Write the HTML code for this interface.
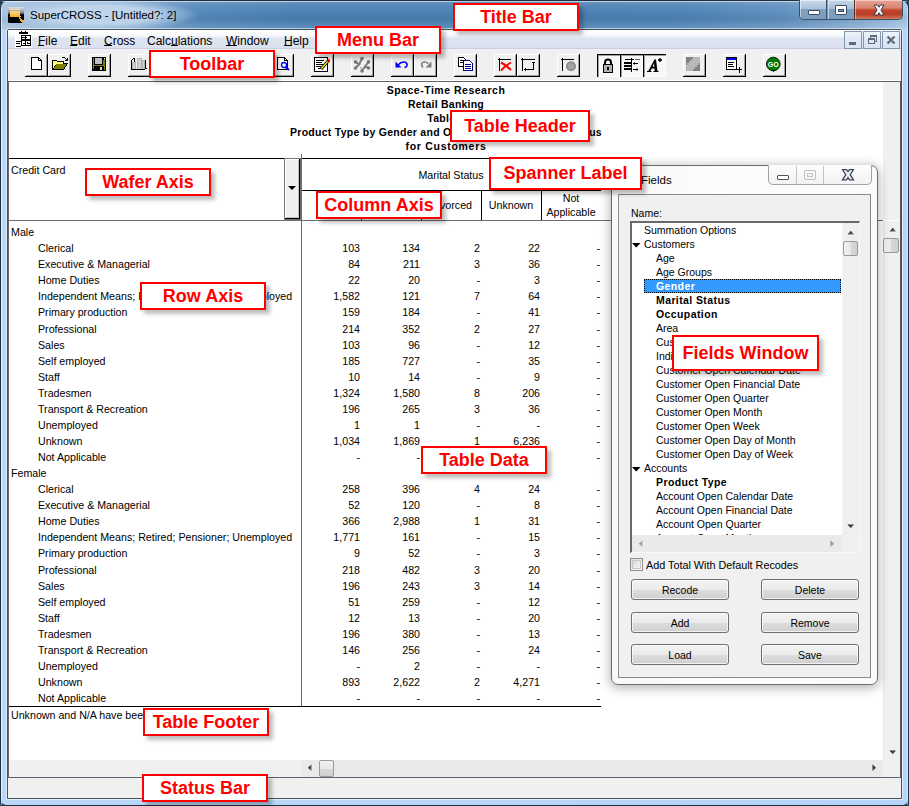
<!DOCTYPE html>
<html><head><meta charset="utf-8"><title>SuperCROSS</title><style>
*{box-sizing:border-box;margin:0;padding:0}
html,body{width:909px;height:806px;overflow:hidden;background:#2a3f58;font-family:"Liberation Sans",sans-serif;position:relative}
.a{position:absolute}
.tt{font-size:11.5px;line-height:12px;color:#000;white-space:nowrap}
.mn{font-size:12px;line-height:12px;color:#000;white-space:nowrap}
.tx{font-size:10.67px;line-height:12px;color:#000;white-space:nowrap}
.hd{font-size:10.5px;line-height:12px;font-weight:bold;letter-spacing:0.27px;color:#000;white-space:nowrap}
.fi{font-size:10.5px;line-height:12px;color:#000;white-space:nowrap}
.fw{font-size:12px;line-height:12px;color:#000;white-space:nowrap}
.fb{font-size:10.5px;line-height:12px;color:#000;white-space:nowrap}
.lbl{position:absolute;border:2px solid #ff0000;background:#fff;color:#ff0000;font-weight:bold;font-size:18px;text-align:center;white-space:nowrap;box-shadow:4px 4px 4px rgba(0,0,0,0.26)}
</style></head><body>
<div class="a" style="left:0;top:0;width:909px;height:806px;background:#1f2f40;border-radius:8px 8px 6px 6px"></div>
<div class="a" style="left:1px;top:1px;width:907px;height:804px;border-radius:7px 7px 5px 5px;background:linear-gradient(90deg,#bad8f8 0,#b9d7f8 8px,#b7d6f8 60%,#b5d5f8 100%)"></div>
<div class="a" style="left:1px;top:1px;width:907px;height:28px;border-radius:7px 7px 0 0;background:linear-gradient(90deg,#a9c4e0 0px,#8fb2d6 60px,#6f9cc8 140px,#5488ba 200px,#4a80b3 300px,#4a80b3 560px,#4e83b5 680px,#5f8fbf 780px,#86acd3 860px,#a8c6e6 907px)"></div>
<div class="a" style="left:1px;top:1px;width:907px;height:28px;border-radius:7px 7px 0 0;background:linear-gradient(180deg,rgba(255,255,255,0.18) 0,rgba(255,255,255,0.08) 4px,rgba(255,255,255,0) 12px,rgba(0,0,0,0.05) 18px,rgba(255,255,255,0.10) 26px)"></div>
<div class="a" style="left:2px;top:1px;width:905px;height:1px;background:rgba(255,255,255,0.55);border-radius:6px 6px 0 0"></div>
<div class="a" style="left:1px;top:8px;width:1px;height:797px;background:rgba(255,255,255,0.6)"></div>
<div class="a" style="left:907px;top:8px;width:1px;height:797px;background:rgba(255,255,255,0.45)"></div>
<div class="a" style="left:0px;top:1px;width:200px;height:28px;background:radial-gradient(ellipse 100px 16px at 100px 14px,rgba(200,220,240,0.85) 55%,rgba(200,220,240,0) 100%)"></div>
<svg class="a" style="left:8px;top:7px" width="16" height="16" viewBox="0 0 16 16" shape-rendering="crispEdges"><defs><linearGradient id="ig" x1="0" y1="0" x2="0" y2="1"><stop offset="0" stop-color="#e4e4e4"/><stop offset="0.35" stop-color="#8a8a8a"/><stop offset="0.5" stop-color="#000"/><stop offset="1" stop-color="#000"/></linearGradient><linearGradient id="og" x1="0" y1="0" x2="0" y2="1"><stop offset="0" stop-color="#ffd48a"/><stop offset="1" stop-color="#fbac2a"/></linearGradient></defs><rect x="0" y="0" width="16" height="16" rx="1.5" fill="url(#ig)" shape-rendering="auto"/><rect x="2" y="2" width="10" height="1" fill="#ffdca8"/><rect x="2" y="4" width="8" height="6" fill="url(#og)"/><rect x="10" y="4" width="2" height="4" fill="#ffc870"/><path d="M10 8 H12 V9 H13 V10 H12 V11 H13 V12 H14 V13 H16 V16 H14 V15 H13 V14 H12 V12 H11 V10 H10 Z" fill="#fbb030"/></svg>
<div class="a tt" style="left:30px;top:9px">SuperCROSS - [Untitled?: 2]</div>
<div class="a" style="left:799px;top:0px;width:104px;height:20px;border:1px solid #3b5266;border-top:none;border-radius:0 0 5px 5px;background:#6f97bd;overflow:hidden"><div class="a" style="left:0;top:0;width:27px;height:19px;background:linear-gradient(#c9dbeb 0,#a9c3dc 45%,#7fa0c0 50%,#7b9dbf 100%);border-right:1px solid #38536b;box-shadow:inset 1px 1px 0 rgba(255,255,255,0.5)"></div><div class="a" style="left:28px;top:0;width:26px;height:19px;background:linear-gradient(#c4d7ea 0,#a6c0da 45%,#7c9ebf 50%,#7a9cbe 100%);box-shadow:inset 1px 1px 0 rgba(255,255,255,0.5)"></div><div class="a" style="left:54px;top:0;width:49px;height:19px;background:linear-gradient(#e8a396 0,#d98472 40%,#c2432a 55%,#b83c26 75%,#d07a5c 100%);border-left:1px solid #5b2a22;box-shadow:inset 1px 1px 0 rgba(255,255,255,0.45)"></div></div>
<div class="a" style="left:808px;top:10px;width:12px;height:5px;background:#fff;border:1px solid #3c4d60;border-radius:1px"></div>
<div class="a" style="left:835px;top:5px;width:12px;height:10px;border:1px solid #3c4d60;border-radius:1px;background:#fff"><div class="a" style="left:2px;top:3px;width:6px;height:3px;background:#7a9cbe;border:1px solid #3c4d60"></div></div>
<svg class="a" style="left:872px;top:4px" width="14" height="12" viewBox="0 0 14 12"><path d="M2 1 L5.5 1 L7 3.2 L8.5 1 L12 1 L9 6 L12 11 L8.5 11 L7 8.8 L5.5 11 L2 11 L5 6 Z" fill="#f4f4f4" stroke="#3b3b4a" stroke-width="1"/></svg>
<div class="a" style="left:6px;top:28px;width:897px;height:772px;border:1px solid rgba(255,255,255,0.55);border-radius:3px 3px 0 0"></div><div class="a" style="left:7px;top:29px;width:895px;height:770px;background:#f0f0f0;border:1px solid #46515c;border-radius:2px 2px 0 0"></div>
<div class="a" style="left:8px;top:30px;width:893px;height:19px;background:linear-gradient(#ffffff 0,#f8f9fc 30%,#eef1f8 36%,#e0e5f2 42%,#dce1ef 90%,#d6dbea 100%)"></div>
<div class="a" style="left:8px;top:48px;width:893px;height:1px;background:#c9d0e0"></div>
<svg class="a" style="left:15px;top:31px" width="17" height="17" viewBox="0 0 17 17" shape-rendering="crispEdges"><rect x="0" y="0" width="17" height="17" fill="#fff"/><rect x="4" y="1" width="9" height="2" fill="#000"/><rect x="6" y="0" width="1" height="1" fill="#000"/><rect x="10" y="0" width="1" height="1" fill="#000"/><rect x="6" y="4" width="10" height="11" fill="#000"/><rect x="7" y="5" width="3" height="1" fill="#fff"/><rect x="7" y="7" width="3" height="1" fill="#fff"/><rect x="11" y="5" width="4" height="1" fill="#fff"/><rect x="11" y="7" width="4" height="1" fill="#fff"/><rect x="12" y="6" width="3" height="1" fill="#fff"/><rect x="7" y="10" width="3" height="4" fill="#fff"/><rect x="11" y="10" width="4" height="4" fill="#fff"/><rect x="8" y="12" width="2" height="1" fill="#000"/><rect x="12" y="12" width="3" height="1" fill="#000"/><rect x="12" y="11" width="1" height="1" fill="#000"/><rect x="1" y="10" width="5" height="1" fill="#000"/><rect x="1" y="12" width="4" height="1" fill="#000"/><rect x="1" y="15" width="5" height="1" fill="#000"/></svg>
<div class="a mn" style="left:38px;top:35px">File</div>
<div class="a mn" style="left:70px;top:35px">Edit</div>
<div class="a mn" style="left:104px;top:35px">Cross</div>
<div class="a mn" style="left:147px;top:35px">Calculations</div>
<div class="a mn" style="left:226px;top:35px">Window</div>
<div class="a mn" style="left:284px;top:35px">Help</div>
<div class="a" style="left:38px;top:45px;width:6px;height:1px;background:#000"></div>
<div class="a" style="left:70px;top:45px;width:7px;height:1px;background:#000"></div>
<div class="a" style="left:104px;top:45px;width:8px;height:1px;background:#000"></div>
<div class="a" style="left:171px;top:45px;width:7px;height:1px;background:#000"></div>
<div class="a" style="left:226px;top:45px;width:11px;height:1px;background:#000"></div>
<div class="a" style="left:284px;top:45px;width:8px;height:1px;background:#000"></div>
<div class="a" style="left:844px;top:31px;width:18px;height:18px;border:1px solid #8696aa;background:linear-gradient(#eef4fb,#dfe9f5 45%,#d8e4f2)"></div>
<div class="a" style="left:863px;top:31px;width:18px;height:18px;border:1px solid #8696aa;background:linear-gradient(#eef4fb,#dfe9f5 45%,#d8e4f2)"></div>
<div class="a" style="left:882px;top:31px;width:18px;height:18px;border:1px solid #8696aa;background:linear-gradient(#eef4fb,#dfe9f5 45%,#d8e4f2)"></div>
<div class="a" style="left:849px;top:42px;width:7px;height:3px;background:#5d6976"></div>
<svg class="a" style="left:866px;top:34px" width="12" height="12" viewBox="0 0 12 12" shape-rendering="crispEdges"><path d="M4.5 4 V1.5 H10.5 V7.5 H8.5" stroke="#5d6976" stroke-width="1.2" fill="none"/><rect x="2.5" y="4.5" width="6" height="5" fill="none" stroke="#5d6976" stroke-width="1.2"/><rect x="2" y="4" width="7" height="2" fill="#5d6976"/><rect x="4" y="1" width="7" height="2" fill="#5d6976"/></svg>
<svg class="a" style="left:886px;top:35px" width="10" height="10" viewBox="0 0 10 10"><path d="M1.5 1.5 L8.5 8.5 M8.5 1.5 L1.5 8.5" stroke="#5d6976" stroke-width="2.2"/></svg>
<div class="a" style="left:8px;top:49px;width:893px;height:31px;background:#f0f0f0"></div>
<div class="a" style="left:8px;top:80px;width:893px;height:1px;background:#fff"></div>
<div class="a" style="left:25px;top:54px;width:23px;height:23px;background:#f0f0f0;border-right:1px solid #000;border-bottom:1px solid #000;box-shadow:inset 1px 1px 0 #fff,inset -1px -1px 0 #a0a0a0"></div><svg class="a" style="left:25px;top:54px" width="23" height="23" viewBox="0 0 23 23"><g shape-rendering="crispEdges"><path d="M6.5 3.5 H13.5 L16.5 6.5 V15.5 H6.5 Z" fill="#fff" stroke="#000"/><path d="M13.5 3.5 V6.5 H16.5" fill="none" stroke="#000"/></g></svg>
<div class="a" style="left:48px;top:54px;width:23px;height:23px;background:#f0f0f0;border-right:1px solid #000;border-bottom:1px solid #000;box-shadow:inset 1px 1px 0 #fff,inset -1px -1px 0 #a0a0a0"></div><svg class="a" style="left:48px;top:54px" width="23" height="23" viewBox="0 0 23 23"><g shape-rendering="crispEdges" transform="translate(0,-1)"><path d="M4.5 7.5 H8.5 L9.5 8.5 H15.5 V10.5 H4.5 Z" fill="#ffff00" stroke="#000"/><path d="M4.5 7.5 V16.5 H15.5 L19.5 10.5 H8.5 L4.5 16.5" fill="#808000" stroke="#000"/><path d="M4.5 8 V16 L8.5 10.5 H15 V9 H9 L8 8 Z" fill="#ffff80"/><path d="M13.5 4.5 H16.5 L18.5 6.5" fill="none" stroke="#000"/><path d="M17 7.5 H20 V5 Z" fill="#000"/></g></svg>
<div class="a" style="left:88px;top:54px;width:23px;height:23px;background:#f0f0f0;border-right:1px solid #000;border-bottom:1px solid #000;box-shadow:inset 1px 1px 0 #fff,inset -1px -1px 0 #a0a0a0"></div><svg class="a" style="left:88px;top:54px" width="23" height="23" viewBox="0 0 23 23"><g shape-rendering="crispEdges"><rect x="4" y="3" width="14" height="14" fill="#000"/><rect x="5" y="4" width="12" height="12" fill="#808000"/><rect x="6" y="4" width="9" height="7" fill="#000"/><rect x="7" y="4" width="7" height="6" fill="#c0c0c0"/><rect x="6" y="12" width="10" height="4" fill="#000"/><rect x="5" y="15" width="1" height="1" fill="#000"/><rect x="12" y="13" width="2" height="3" fill="#d8d8d8"/><rect x="16" y="4" width="1" height="1" fill="#fff"/><rect x="15" y="4" width="1" height="2" fill="#000"/></g></svg>
<div class="a" style="left:128px;top:54px;width:23px;height:23px;background:#f0f0f0;border-right:1px solid #000;border-bottom:1px solid #000;box-shadow:inset 1px 1px 0 #fff,inset -1px -1px 0 #a0a0a0"></div><svg class="a" style="left:128px;top:54px" width="23" height="23" viewBox="0 0 23 23"><g shape-rendering="crispEdges" transform="translate(0,-1.5)"><rect x="4" y="9" width="4" height="7" fill="#b4b4b4"/><rect x="9" y="5" width="5" height="11" fill="#b4b4b4"/><rect x="14" y="7" width="3" height="9" fill="#b4b4b4"/><rect x="5" y="10" width="2" height="6" fill="#d0d0d0"/><rect x="10" y="6" width="3" height="10" fill="#d0d0d0"/><rect x="15" y="8" width="1" height="8" fill="#d0d0d0"/><rect x="3" y="7" width="1" height="10" fill="#000"/><rect x="3" y="16" width="14" height="1" fill="#000"/><rect x="17" y="7" width="1" height="9" fill="#000"/><rect x="18" y="15" width="1" height="1" fill="#000"/><rect x="5" y="5" width="2" height="1" fill="#000"/><rect x="6" y="5" width="1" height="4" fill="#000"/><rect x="4" y="6" width="1" height="1" fill="#000"/></g></svg>
<div class="a" style="left:151px;top:54px;width:23px;height:23px;background:#f0f0f0;border-right:1px solid #000;border-bottom:1px solid #000;box-shadow:inset 1px 1px 0 #fff,inset -1px -1px 0 #a0a0a0"></div><svg class="a" style="left:151px;top:54px" width="23" height="23" viewBox="0 0 23 23"><g shape-rendering="crispEdges" transform="translate(0,-1.5)"><rect x="4" y="9" width="4" height="7" fill="#b4b4b4"/><rect x="9" y="5" width="5" height="11" fill="#b4b4b4"/><rect x="14" y="7" width="3" height="9" fill="#b4b4b4"/><rect x="5" y="10" width="2" height="6" fill="#d0d0d0"/><rect x="10" y="6" width="3" height="10" fill="#d0d0d0"/><rect x="15" y="8" width="1" height="8" fill="#d0d0d0"/><rect x="3" y="7" width="1" height="10" fill="#000"/><rect x="3" y="16" width="14" height="1" fill="#000"/><rect x="17" y="7" width="1" height="9" fill="#000"/><rect x="18" y="15" width="1" height="1" fill="#000"/><rect x="5" y="5" width="2" height="1" fill="#000"/><rect x="6" y="5" width="1" height="4" fill="#000"/><rect x="4" y="6" width="1" height="1" fill="#000"/></g></svg>
<div class="a" style="left:174px;top:54px;width:23px;height:23px;background:#f0f0f0;border-right:1px solid #000;border-bottom:1px solid #000;box-shadow:inset 1px 1px 0 #fff,inset -1px -1px 0 #a0a0a0"></div><svg class="a" style="left:174px;top:54px" width="23" height="23" viewBox="0 0 23 23"></svg>
<div class="a" style="left:197px;top:54px;width:23px;height:23px;background:#f0f0f0;border-right:1px solid #000;border-bottom:1px solid #000;box-shadow:inset 1px 1px 0 #fff,inset -1px -1px 0 #a0a0a0"></div><svg class="a" style="left:197px;top:54px" width="23" height="23" viewBox="0 0 23 23"></svg>
<div class="a" style="left:220px;top:54px;width:23px;height:23px;background:#f0f0f0;border-right:1px solid #000;border-bottom:1px solid #000;box-shadow:inset 1px 1px 0 #fff,inset -1px -1px 0 #a0a0a0"></div><svg class="a" style="left:220px;top:54px" width="23" height="23" viewBox="0 0 23 23"></svg>
<div class="a" style="left:248px;top:54px;width:23px;height:23px;background:#f0f0f0;border-right:1px solid #000;border-bottom:1px solid #000;box-shadow:inset 1px 1px 0 #fff,inset -1px -1px 0 #a0a0a0"></div><svg class="a" style="left:248px;top:54px" width="23" height="23" viewBox="0 0 23 23"></svg>
<div class="a" style="left:271px;top:54px;width:23px;height:23px;background:#f0f0f0;border-right:1px solid #000;border-bottom:1px solid #000;box-shadow:inset 1px 1px 0 #fff,inset -1px -1px 0 #a0a0a0"></div><svg class="a" style="left:271px;top:54px" width="23" height="23" viewBox="0 0 23 23"><g shape-rendering="crispEdges"><path d="M6.5 3.5 H13.5 L16.5 6.5 V15.5 H6.5 Z" fill="#fff" stroke="#000"/><path d="M13.5 3.5 V6.5 H16.5" fill="none" stroke="#000"/></g><circle cx="13" cy="11" r="2.5" fill="#fff" stroke="#0000ff" stroke-width="1.3"/><path d="M14.5 13 L18 16" stroke="#0000ff" stroke-width="2"/></svg>
<div class="a" style="left:311px;top:54px;width:23px;height:23px;background:#f0f0f0;border-right:1px solid #000;border-bottom:1px solid #000;box-shadow:inset 1px 1px 0 #fff,inset -1px -1px 0 #a0a0a0"></div><svg class="a" style="left:311px;top:54px" width="23" height="23" viewBox="0 0 23 23"><g shape-rendering="crispEdges"><rect x="3.5" y="3.5" width="13" height="14" fill="#fff" stroke="#000"/><rect x="5" y="6" width="8" height="1" fill="#000"/><rect x="5" y="8" width="6" height="1" fill="#000"/><rect x="5" y="10" width="8" height="1" fill="#000"/><rect x="5" y="12" width="5" height="1" fill="#000"/><rect x="7" y="14" width="4" height="1" fill="#000"/></g><path d="M10 15 L18 6" stroke="#000" stroke-width="3"/><path d="M10.3 14.6 L17.6 6.4" stroke="#ffff00" stroke-width="1.4"/><path d="M16.5 7.5 L18.5 5.5" stroke="#ff0000" stroke-width="2"/></svg>
<div class="a" style="left:351px;top:54px;width:23px;height:23px;background:#f0f0f0;border-right:1px solid #000;border-bottom:1px solid #000;box-shadow:inset 1px 1px 0 #fff,inset -1px -1px 0 #a0a0a0"></div><svg class="a" style="left:351px;top:54px" width="23" height="23" viewBox="0 0 23 23"><g fill="#7a7a7a"><circle cx="11" cy="4.6" r="1.8"/><circle cx="4.5" cy="7.9" r="1.8"/><circle cx="17.5" cy="7.9" r="1.8"/><circle cx="4.5" cy="14" r="1.8"/><circle cx="17.5" cy="14" r="1.8"/><circle cx="11" cy="17" r="1.8"/></g><path d="M4.5 7.9 L8 10.5 L11 4.6 M8 10.5 L4.5 14 M17.5 7.9 L14 12.5 L17.5 14 M14 12.5 L11 17 M8 10.5 L9.5 9" fill="none" stroke="#7a7a7a" stroke-width="2"/><circle cx="10" cy="14" r="0.8" fill="#6a8ab0"/></svg>
<div class="a" style="left:391px;top:54px;width:23px;height:23px;background:#f0f0f0;border-right:1px solid #000;border-bottom:1px solid #000;box-shadow:inset 1px 1px 0 #fff,inset -1px -1px 0 #a0a0a0"></div><svg class="a" style="left:391px;top:54px" width="23" height="23" viewBox="0 0 23 23"><path d="M7 11 Q10 7.5 13.5 8 Q16.5 8.5 16 11.5 Q15.5 13.2 13.5 13.5" fill="none" stroke="#0000ff" stroke-width="1.6"/><path d="M4.5 7.5 V13.5 H10.5 Z" fill="#0000ff"/></svg>
<div class="a" style="left:414px;top:54px;width:23px;height:23px;background:#f0f0f0;border-right:1px solid #000;border-bottom:1px solid #000;box-shadow:inset 1px 1px 0 #fff,inset -1px -1px 0 #a0a0a0"></div><svg class="a" style="left:414px;top:54px" width="23" height="23" viewBox="0 0 23 23"><path d="M9 13.5 Q6.5 10.5 8.5 8.5 Q11 7 14.5 9.5" fill="none" stroke="#808080" stroke-width="1.6"/><path d="M17.5 7.5 V13.5 H11.5 Z" fill="#808080"/></svg>
<div class="a" style="left:454px;top:54px;width:23px;height:23px;background:#f0f0f0;border-right:1px solid #000;border-bottom:1px solid #000;box-shadow:inset 1px 1px 0 #fff,inset -1px -1px 0 #a0a0a0"></div><svg class="a" style="left:454px;top:54px" width="23" height="23" viewBox="0 0 23 23"><g shape-rendering="crispEdges" transform="translate(1,0)"><path d="M3.5 3.5 H8.5 L10.5 5.5 V12.5 H3.5 Z" fill="#fff" stroke="#000"/><rect x="5" y="6" width="4" height="1" fill="#000"/><rect x="5" y="8" width="4" height="1" fill="#000"/><path d="M8.5 6.5 H14.5 L17.5 9.5 V16.5 H8.5 Z" fill="#fff" stroke="#000080"/><rect x="10" y="10" width="6" height="1" fill="#000080"/><rect x="10" y="12" width="6" height="1" fill="#000080"/><rect x="10" y="14" width="6" height="1" fill="#000080"/></g></svg>
<div class="a" style="left:494px;top:54px;width:23px;height:23px;background:#f0f0f0;border-right:1px solid #000;border-bottom:1px solid #000;box-shadow:inset 1px 1px 0 #fff,inset -1px -1px 0 #a0a0a0"></div><svg class="a" style="left:494px;top:54px" width="23" height="23" viewBox="0 0 23 23"><g shape-rendering="crispEdges"><rect x="5" y="4" width="1" height="13" fill="#000"/><rect x="4" y="5" width="3" height="1" fill="#000"/><rect x="5" y="5" width="12" height="1" fill="#000"/></g><path d="M7 8.5 Q12 11 17 16 M17 8.5 Q11 12 7 16.5" fill="none" stroke="#ff0000" stroke-width="2"/></svg>
<div class="a" style="left:517px;top:54px;width:23px;height:23px;background:#f0f0f0;border-right:1px solid #000;border-bottom:1px solid #000;box-shadow:inset 1px 1px 0 #fff,inset -1px -1px 0 #a0a0a0"></div><svg class="a" style="left:517px;top:54px" width="23" height="23" viewBox="0 0 23 23"><g shape-rendering="crispEdges"><rect x="5" y="4" width="1" height="13" fill="#000"/><rect x="4" y="5" width="3" height="1" fill="#000"/><rect x="5" y="5" width="13" height="1" fill="#000"/><rect x="16" y="8" width="1" height="8" fill="#000"/><rect x="15" y="8" width="3" height="1" fill="#000"/><rect x="7" y="15" width="10" height="1" fill="#000"/><rect x="8" y="14" width="1" height="3" fill="#000"/></g></svg>
<div class="a" style="left:557px;top:54px;width:23px;height:23px;background:#f0f0f0;border-right:1px solid #000;border-bottom:1px solid #000;box-shadow:inset 1px 1px 0 #fff,inset -1px -1px 0 #a0a0a0"></div><svg class="a" style="left:557px;top:54px" width="23" height="23" viewBox="0 0 23 23"><g shape-rendering="crispEdges"><rect x="5" y="4" width="1" height="13" fill="#000"/><rect x="4" y="5" width="3" height="1" fill="#000"/><rect x="5" y="5" width="12" height="1" fill="#000"/></g><circle cx="14" cy="12.3" r="5" fill="#8c8c8c"/><circle cx="14" cy="12.3" r="3" fill="#a4a4a4"/></svg>
<div class="a" style="left:597px;top:54px;width:23px;height:23px;background:#f7f7f7;border-left:1px solid #000;border-top:1px solid #000;box-shadow:inset 1px 1px 0 #a0a0a0,inset -1px -1px 0 #fff"></div><svg class="a" style="left:597px;top:54px" width="23" height="23" viewBox="0 0 23 23"><path d="M8 11 V8.5 Q8 5.5 11 5.5 Q14 5.5 14 8.5 V11" fill="none" stroke="#000" stroke-width="2"/><g shape-rendering="crispEdges"><rect x="6.5" y="10.5" width="9" height="8" fill="#b0b0b0" stroke="#000"/><rect x="10" y="13" width="2" height="3" fill="#000"/></g></svg>
<div class="a" style="left:620px;top:54px;width:23px;height:23px;background:#f7f7f7;border-left:1px solid #000;border-top:1px solid #000;box-shadow:inset 1px 1px 0 #a0a0a0,inset -1px -1px 0 #fff"></div><svg class="a" style="left:620px;top:54px" width="23" height="23" viewBox="0 0 23 23"><g shape-rendering="crispEdges"><rect x="5" y="5" width="9" height="1" fill="#000"/><rect x="15" y="5" width="5" height="1" fill="#000" opacity="0.6"/><rect x="4" y="8" width="7" height="2" fill="#000"/><rect x="4" y="11" width="7" height="2" fill="#000"/><rect x="4" y="14" width="7" height="2" fill="#000"/><rect x="11" y="4" width="1" height="14" fill="#000"/><rect x="13" y="9" width="5" height="1" fill="#000"/><rect x="13" y="15" width="5" height="1" fill="#000"/></g><path d="M13 9.5 L15 8 V11 Z M18.5 15.5 L16.5 14 V17 Z" fill="#000"/></svg>
<div class="a" style="left:643px;top:54px;width:23px;height:23px;background:#f7f7f7;border-left:1px solid #000;border-top:1px solid #000;box-shadow:inset 1px 1px 0 #a0a0a0,inset -1px -1px 0 #fff"></div><svg class="a" style="left:643px;top:54px" width="23" height="23" viewBox="0 0 23 23"><path d="M5 17.5 L11.5 5.5 H13 L14.5 17.5 H11.8 L11.5 14.5 H8.8 L7.2 17.5 Z M9.7 12.8 H11.3 L11 9 Z" fill="#000" fill-rule="evenodd"/><path d="M4 17.5 H8.5 M10.5 17.5 H15.5" stroke="#000" stroke-width="1"/><path d="M17 4 V8 M15 6 H19" stroke="#000" stroke-width="1.4"/></svg>
<div class="a" style="left:683px;top:54px;width:23px;height:23px;background:#f0f0f0;border-right:1px solid #000;border-bottom:1px solid #000;box-shadow:inset 1px 1px 0 #fff,inset -1px -1px 0 #a0a0a0"></div><svg class="a" style="left:683px;top:54px" width="23" height="23" viewBox="0 0 23 23"><g shape-rendering="crispEdges"><rect x="3" y="3" width="14" height="14" fill="#b8b8b8"/><path d="M3 3 H10 V5 H8 V7 H6 V9 H4 V11 H3 Z" fill="#808080"/><path d="M17 17 H10 V15 H12 V13 H14 V11 H16 V9 H17 Z" fill="#808080"/></g></svg>
<div class="a" style="left:723px;top:54px;width:23px;height:23px;background:#f0f0f0;border-right:1px solid #000;border-bottom:1px solid #000;box-shadow:inset 1px 1px 0 #fff,inset -1px -1px 0 #a0a0a0"></div><svg class="a" style="left:723px;top:54px" width="23" height="23" viewBox="0 0 23 23"><g shape-rendering="crispEdges"><rect x="3.5" y="3.5" width="10" height="12" fill="#fff" stroke="#000"/><rect x="4" y="4" width="9" height="2" fill="#0000ff"/><rect x="5" y="8" width="6" height="1" fill="#000"/><rect x="5" y="10" width="5" height="1" fill="#000"/><rect x="5" y="12" width="6" height="1" fill="#000"/><rect x="16" y="13" width="1" height="6" fill="#000"/><rect x="14" y="15" width="5" height="1" fill="#000"/></g></svg>
<div class="a" style="left:763px;top:54px;width:23px;height:23px;background:#f0f0f0;border-right:1px solid #000;border-bottom:1px solid #000;box-shadow:inset 1px 1px 0 #fff,inset -1px -1px 0 #a0a0a0"></div><svg class="a" style="left:763px;top:54px" width="23" height="23" viewBox="0 0 23 23"><circle cx="10.3" cy="10" r="6.8" fill="#007a00" stroke="#002800" stroke-width="1"/><path d="M9 16 L10.5 18 L12 16 Z" fill="#000"/><text x="10.3" y="12.6" text-anchor="middle" font-family="Liberation Sans" font-weight="bold" font-size="7" fill="#fff" style="-webkit-font-smoothing:antialiased">GO</text></svg>
<div class="a" style="left:8px;top:81px;width:893px;height:697px;background:#fff;border-left:1px solid #6a6a6a;border-top:1px solid #646464;border-right:1px solid #585858"></div>
<div class="a hd" style="left:246px;top:84px;width:400px;text-align:center;letter-spacing:0.51px">Space-Time Research</div>
<div class="a hd" style="left:246px;top:98px;width:400px;text-align:center;letter-spacing:0.22px">Retail Banking</div>
<div class="a hd" style="left:246px;top:112px;width:400px;text-align:center;letter-spacing:0.3px">Table 1</div>
<div class="a hd" style="left:246px;top:126px;width:400px;text-align:center;letter-spacing:0.27px">Product Type by Gender and Occupation and Marital Status</div>
<div class="a hd" style="left:246px;top:140px;width:400px;text-align:center;letter-spacing:0.71px">for Customers</div>
<div class="a" style="left:9px;top:158px;width:276px;height:1px;background:#000"></div>
<div class="a tx" style="left:11px;top:164px">Credit Card</div>
<div class="a" style="left:284px;top:158px;width:17px;height:62px;background:#f0f0f0;border:1px solid #7a7a7a;border-right:1px solid #6e6e6e;border-bottom:1px solid #6e6e6e;box-shadow:inset -1px -1px 0 #000,inset 1px 1px 0 #fff,inset -2px -2px 0 #c4c4c4"></div>
<svg class="a" style="left:288px;top:186px" width="9" height="5" viewBox="0 0 9 5"><path d="M0 0 H8 L4 4 Z" fill="#000"/></svg>
<div class="a" style="left:301px;top:154px;width:1px;height:553px;background:#6e6e6e"></div>
<div class="a" style="left:302px;top:158px;width:299px;height:1px;background:#000"></div>
<div class="a" style="left:302px;top:190px;width:299px;height:1px;background:#000"></div>
<div class="a" style="left:361px;top:190px;width:1px;height:30px;background:#000"></div>
<div class="a" style="left:421px;top:190px;width:1px;height:30px;background:#000"></div>
<div class="a" style="left:481px;top:190px;width:1px;height:30px;background:#000"></div>
<div class="a" style="left:541px;top:190px;width:1px;height:30px;background:#000"></div>
<div class="a" style="left:9px;top:220px;width:874px;height:1px;background:#6e6e6e"></div>
<div class="a tx" style="left:391px;top:169px;width:120px;text-align:center">Marital Status</div>
<div class="a tx" style="left:362px;top:199px;width:58px;text-align:center">Separated</div>
<div class="a tx" style="left:422px;top:199px;width:58px;text-align:center">Divorced</div>
<div class="a tx" style="left:482px;top:199px;width:58px;text-align:center">Unknown</div>
<div class="a tx" style="left:542px;top:192px;width:58px;text-align:center">Not</div>
<div class="a tx" style="left:542px;top:206px;width:58px;text-align:center">Applicable</div>
<div class="a tx" style="left:11px;top:226px">Male</div>
<div class="a tx" style="left:38px;top:242px">Clerical</div>
<div class="a tx" style="left:280px;top:242px;width:80px;text-align:right">103</div>
<div class="a tx" style="left:340px;top:242px;width:80px;text-align:right">134</div>
<div class="a tx" style="left:400px;top:242px;width:80px;text-align:right">2</div>
<div class="a tx" style="left:460px;top:242px;width:80px;text-align:right">22</div>
<div class="a tx" style="left:520px;top:242px;width:80px;text-align:right">-</div>
<div class="a tx" style="left:38px;top:258px">Executive &amp; Managerial</div>
<div class="a tx" style="left:280px;top:258px;width:80px;text-align:right">84</div>
<div class="a tx" style="left:340px;top:258px;width:80px;text-align:right">211</div>
<div class="a tx" style="left:400px;top:258px;width:80px;text-align:right">3</div>
<div class="a tx" style="left:460px;top:258px;width:80px;text-align:right">36</div>
<div class="a tx" style="left:520px;top:258px;width:80px;text-align:right">-</div>
<div class="a tx" style="left:38px;top:274px">Home Duties</div>
<div class="a tx" style="left:280px;top:274px;width:80px;text-align:right">22</div>
<div class="a tx" style="left:340px;top:274px;width:80px;text-align:right">20</div>
<div class="a tx" style="left:400px;top:274px;width:80px;text-align:right">-</div>
<div class="a tx" style="left:460px;top:274px;width:80px;text-align:right">3</div>
<div class="a tx" style="left:520px;top:274px;width:80px;text-align:right">-</div>
<div class="a tx" style="left:38px;top:290px">Independent Means; Retired; Pensioner; Unemployed</div>
<div class="a tx" style="left:280px;top:290px;width:80px;text-align:right">1,582</div>
<div class="a tx" style="left:340px;top:290px;width:80px;text-align:right">121</div>
<div class="a tx" style="left:400px;top:290px;width:80px;text-align:right">7</div>
<div class="a tx" style="left:460px;top:290px;width:80px;text-align:right">64</div>
<div class="a tx" style="left:520px;top:290px;width:80px;text-align:right">-</div>
<div class="a tx" style="left:38px;top:306px">Primary production</div>
<div class="a tx" style="left:280px;top:306px;width:80px;text-align:right">159</div>
<div class="a tx" style="left:340px;top:306px;width:80px;text-align:right">184</div>
<div class="a tx" style="left:400px;top:306px;width:80px;text-align:right">-</div>
<div class="a tx" style="left:460px;top:306px;width:80px;text-align:right">41</div>
<div class="a tx" style="left:520px;top:306px;width:80px;text-align:right">-</div>
<div class="a tx" style="left:38px;top:323px">Professional</div>
<div class="a tx" style="left:280px;top:323px;width:80px;text-align:right">214</div>
<div class="a tx" style="left:340px;top:323px;width:80px;text-align:right">352</div>
<div class="a tx" style="left:400px;top:323px;width:80px;text-align:right">2</div>
<div class="a tx" style="left:460px;top:323px;width:80px;text-align:right">27</div>
<div class="a tx" style="left:520px;top:323px;width:80px;text-align:right">-</div>
<div class="a tx" style="left:38px;top:339px">Sales</div>
<div class="a tx" style="left:280px;top:339px;width:80px;text-align:right">103</div>
<div class="a tx" style="left:340px;top:339px;width:80px;text-align:right">96</div>
<div class="a tx" style="left:400px;top:339px;width:80px;text-align:right">-</div>
<div class="a tx" style="left:460px;top:339px;width:80px;text-align:right">12</div>
<div class="a tx" style="left:520px;top:339px;width:80px;text-align:right">-</div>
<div class="a tx" style="left:38px;top:355px">Self employed</div>
<div class="a tx" style="left:280px;top:355px;width:80px;text-align:right">185</div>
<div class="a tx" style="left:340px;top:355px;width:80px;text-align:right">727</div>
<div class="a tx" style="left:400px;top:355px;width:80px;text-align:right">-</div>
<div class="a tx" style="left:460px;top:355px;width:80px;text-align:right">35</div>
<div class="a tx" style="left:520px;top:355px;width:80px;text-align:right">-</div>
<div class="a tx" style="left:38px;top:371px">Staff</div>
<div class="a tx" style="left:280px;top:371px;width:80px;text-align:right">10</div>
<div class="a tx" style="left:340px;top:371px;width:80px;text-align:right">14</div>
<div class="a tx" style="left:400px;top:371px;width:80px;text-align:right">-</div>
<div class="a tx" style="left:460px;top:371px;width:80px;text-align:right">9</div>
<div class="a tx" style="left:520px;top:371px;width:80px;text-align:right">-</div>
<div class="a tx" style="left:38px;top:387px">Tradesmen</div>
<div class="a tx" style="left:280px;top:387px;width:80px;text-align:right">1,324</div>
<div class="a tx" style="left:340px;top:387px;width:80px;text-align:right">1,580</div>
<div class="a tx" style="left:400px;top:387px;width:80px;text-align:right">8</div>
<div class="a tx" style="left:460px;top:387px;width:80px;text-align:right">206</div>
<div class="a tx" style="left:520px;top:387px;width:80px;text-align:right">-</div>
<div class="a tx" style="left:38px;top:403px">Transport &amp; Recreation</div>
<div class="a tx" style="left:280px;top:403px;width:80px;text-align:right">196</div>
<div class="a tx" style="left:340px;top:403px;width:80px;text-align:right">265</div>
<div class="a tx" style="left:400px;top:403px;width:80px;text-align:right">3</div>
<div class="a tx" style="left:460px;top:403px;width:80px;text-align:right">36</div>
<div class="a tx" style="left:520px;top:403px;width:80px;text-align:right">-</div>
<div class="a tx" style="left:38px;top:419px">Unemployed</div>
<div class="a tx" style="left:280px;top:419px;width:80px;text-align:right">1</div>
<div class="a tx" style="left:340px;top:419px;width:80px;text-align:right">1</div>
<div class="a tx" style="left:400px;top:419px;width:80px;text-align:right">-</div>
<div class="a tx" style="left:460px;top:419px;width:80px;text-align:right">-</div>
<div class="a tx" style="left:520px;top:419px;width:80px;text-align:right">-</div>
<div class="a tx" style="left:38px;top:435px">Unknown</div>
<div class="a tx" style="left:280px;top:435px;width:80px;text-align:right">1,034</div>
<div class="a tx" style="left:340px;top:435px;width:80px;text-align:right">1,869</div>
<div class="a tx" style="left:400px;top:435px;width:80px;text-align:right">1</div>
<div class="a tx" style="left:460px;top:435px;width:80px;text-align:right">6,236</div>
<div class="a tx" style="left:520px;top:435px;width:80px;text-align:right">-</div>
<div class="a tx" style="left:38px;top:451px">Not Applicable</div>
<div class="a tx" style="left:280px;top:451px;width:80px;text-align:right">-</div>
<div class="a tx" style="left:340px;top:451px;width:80px;text-align:right">-</div>
<div class="a tx" style="left:400px;top:451px;width:80px;text-align:right">-</div>
<div class="a tx" style="left:460px;top:451px;width:80px;text-align:right">-</div>
<div class="a tx" style="left:520px;top:451px;width:80px;text-align:right">-</div>
<div class="a tx" style="left:11px;top:467px">Female</div>
<div class="a tx" style="left:38px;top:483px">Clerical</div>
<div class="a tx" style="left:280px;top:483px;width:80px;text-align:right">258</div>
<div class="a tx" style="left:340px;top:483px;width:80px;text-align:right">396</div>
<div class="a tx" style="left:400px;top:483px;width:80px;text-align:right">4</div>
<div class="a tx" style="left:460px;top:483px;width:80px;text-align:right">24</div>
<div class="a tx" style="left:520px;top:483px;width:80px;text-align:right">-</div>
<div class="a tx" style="left:38px;top:499px">Executive &amp; Managerial</div>
<div class="a tx" style="left:280px;top:499px;width:80px;text-align:right">52</div>
<div class="a tx" style="left:340px;top:499px;width:80px;text-align:right">120</div>
<div class="a tx" style="left:400px;top:499px;width:80px;text-align:right">-</div>
<div class="a tx" style="left:460px;top:499px;width:80px;text-align:right">8</div>
<div class="a tx" style="left:520px;top:499px;width:80px;text-align:right">-</div>
<div class="a tx" style="left:38px;top:515px">Home Duties</div>
<div class="a tx" style="left:280px;top:515px;width:80px;text-align:right">366</div>
<div class="a tx" style="left:340px;top:515px;width:80px;text-align:right">2,988</div>
<div class="a tx" style="left:400px;top:515px;width:80px;text-align:right">1</div>
<div class="a tx" style="left:460px;top:515px;width:80px;text-align:right">31</div>
<div class="a tx" style="left:520px;top:515px;width:80px;text-align:right">-</div>
<div class="a tx" style="left:38px;top:531px">Independent Means; Retired; Pensioner; Unemployed</div>
<div class="a tx" style="left:280px;top:531px;width:80px;text-align:right">1,771</div>
<div class="a tx" style="left:340px;top:531px;width:80px;text-align:right">161</div>
<div class="a tx" style="left:400px;top:531px;width:80px;text-align:right">-</div>
<div class="a tx" style="left:460px;top:531px;width:80px;text-align:right">15</div>
<div class="a tx" style="left:520px;top:531px;width:80px;text-align:right">-</div>
<div class="a tx" style="left:38px;top:547px">Primary production</div>
<div class="a tx" style="left:280px;top:547px;width:80px;text-align:right">9</div>
<div class="a tx" style="left:340px;top:547px;width:80px;text-align:right">52</div>
<div class="a tx" style="left:400px;top:547px;width:80px;text-align:right">-</div>
<div class="a tx" style="left:460px;top:547px;width:80px;text-align:right">3</div>
<div class="a tx" style="left:520px;top:547px;width:80px;text-align:right">-</div>
<div class="a tx" style="left:38px;top:564px">Professional</div>
<div class="a tx" style="left:280px;top:564px;width:80px;text-align:right">218</div>
<div class="a tx" style="left:340px;top:564px;width:80px;text-align:right">482</div>
<div class="a tx" style="left:400px;top:564px;width:80px;text-align:right">3</div>
<div class="a tx" style="left:460px;top:564px;width:80px;text-align:right">20</div>
<div class="a tx" style="left:520px;top:564px;width:80px;text-align:right">-</div>
<div class="a tx" style="left:38px;top:580px">Sales</div>
<div class="a tx" style="left:280px;top:580px;width:80px;text-align:right">196</div>
<div class="a tx" style="left:340px;top:580px;width:80px;text-align:right">243</div>
<div class="a tx" style="left:400px;top:580px;width:80px;text-align:right">3</div>
<div class="a tx" style="left:460px;top:580px;width:80px;text-align:right">14</div>
<div class="a tx" style="left:520px;top:580px;width:80px;text-align:right">-</div>
<div class="a tx" style="left:38px;top:596px">Self employed</div>
<div class="a tx" style="left:280px;top:596px;width:80px;text-align:right">51</div>
<div class="a tx" style="left:340px;top:596px;width:80px;text-align:right">259</div>
<div class="a tx" style="left:400px;top:596px;width:80px;text-align:right">-</div>
<div class="a tx" style="left:460px;top:596px;width:80px;text-align:right">12</div>
<div class="a tx" style="left:520px;top:596px;width:80px;text-align:right">-</div>
<div class="a tx" style="left:38px;top:612px">Staff</div>
<div class="a tx" style="left:280px;top:612px;width:80px;text-align:right">12</div>
<div class="a tx" style="left:340px;top:612px;width:80px;text-align:right">13</div>
<div class="a tx" style="left:400px;top:612px;width:80px;text-align:right">-</div>
<div class="a tx" style="left:460px;top:612px;width:80px;text-align:right">20</div>
<div class="a tx" style="left:520px;top:612px;width:80px;text-align:right">-</div>
<div class="a tx" style="left:38px;top:628px">Tradesmen</div>
<div class="a tx" style="left:280px;top:628px;width:80px;text-align:right">196</div>
<div class="a tx" style="left:340px;top:628px;width:80px;text-align:right">380</div>
<div class="a tx" style="left:400px;top:628px;width:80px;text-align:right">-</div>
<div class="a tx" style="left:460px;top:628px;width:80px;text-align:right">13</div>
<div class="a tx" style="left:520px;top:628px;width:80px;text-align:right">-</div>
<div class="a tx" style="left:38px;top:644px">Transport &amp; Recreation</div>
<div class="a tx" style="left:280px;top:644px;width:80px;text-align:right">146</div>
<div class="a tx" style="left:340px;top:644px;width:80px;text-align:right">256</div>
<div class="a tx" style="left:400px;top:644px;width:80px;text-align:right">-</div>
<div class="a tx" style="left:460px;top:644px;width:80px;text-align:right">24</div>
<div class="a tx" style="left:520px;top:644px;width:80px;text-align:right">-</div>
<div class="a tx" style="left:38px;top:660px">Unemployed</div>
<div class="a tx" style="left:280px;top:660px;width:80px;text-align:right">-</div>
<div class="a tx" style="left:340px;top:660px;width:80px;text-align:right">2</div>
<div class="a tx" style="left:400px;top:660px;width:80px;text-align:right">-</div>
<div class="a tx" style="left:460px;top:660px;width:80px;text-align:right">-</div>
<div class="a tx" style="left:520px;top:660px;width:80px;text-align:right">-</div>
<div class="a tx" style="left:38px;top:676px">Unknown</div>
<div class="a tx" style="left:280px;top:676px;width:80px;text-align:right">893</div>
<div class="a tx" style="left:340px;top:676px;width:80px;text-align:right">2,622</div>
<div class="a tx" style="left:400px;top:676px;width:80px;text-align:right">2</div>
<div class="a tx" style="left:460px;top:676px;width:80px;text-align:right">4,271</div>
<div class="a tx" style="left:520px;top:676px;width:80px;text-align:right">-</div>
<div class="a tx" style="left:38px;top:692px">Not Applicable</div>
<div class="a tx" style="left:280px;top:692px;width:80px;text-align:right">-</div>
<div class="a tx" style="left:340px;top:692px;width:80px;text-align:right">-</div>
<div class="a tx" style="left:400px;top:692px;width:80px;text-align:right">-</div>
<div class="a tx" style="left:460px;top:692px;width:80px;text-align:right">-</div>
<div class="a tx" style="left:520px;top:692px;width:80px;text-align:right">-</div>
<div class="a" style="left:9px;top:706px;width:592px;height:1px;background:#000"></div>
<div class="a tx" style="left:11px;top:709px">Unknown and N/A have been</div>
<div class="a" style="left:883px;top:82px;width:17px;height:138px;background:#f0f0f0"></div>
<div class="a" style="left:883px;top:221px;width:17px;height:539px;background:#f0f0f0;border-left:1px solid #e6e6e6"></div>
<svg class="a" style="left:889px;top:227px" width="8" height="5" viewBox="0 0 8 5"><defs><linearGradient id="ag1" x1="0" y1="0" x2="1" y2="1"><stop offset="0" stop-color="#111"/><stop offset="1" stop-color="#7a7a7a"/></linearGradient></defs><path d="M0.5 4.5 L3.8 0.8 L7.1 4.5 Z" fill="url(#ag1)"/></svg>
<div class="a" style="left:883px;top:238px;width:16px;height:15px;border:1px solid #9a9a9a;border-radius:2px;background:linear-gradient(90deg,#f2f2f2 0,#e8e8e8 50%,#d8d8d8 51%,#d0d0d0 100%)"></div>
<svg class="a" style="left:889px;top:750px" width="8" height="5" viewBox="0 0 8 5"><defs><linearGradient id="ag2" x1="0" y1="0" x2="1" y2="1"><stop offset="0" stop-color="#111"/><stop offset="1" stop-color="#7a7a7a"/></linearGradient></defs><path d="M0.5 0.5 L3.8 4.2 L7.1 0.5 Z" fill="url(#ag2)"/></svg>
<div class="a" style="left:9px;top:760px;width:292px;height:17px;background:#f0f0f0"></div>
<div class="a" style="left:301px;top:760px;width:582px;height:17px;background:#eaeaea"></div>
<div class="a" style="left:883px;top:760px;width:17px;height:17px;background:#f0f0f0"></div>
<svg class="a" style="left:307px;top:764px;opacity:1" width="5" height="8" viewBox="0 0 5 8"><defs><linearGradient id="ag3" x1="0" y1="0" x2="1" y2="1"><stop offset="0" stop-color="#111"/><stop offset="1" stop-color="#7a7a7a"/></linearGradient></defs><path d="M4.5 0.5 L0.8 3.8 L4.5 7.1 Z" fill="url(#ag3)"/></svg>
<div class="a" style="left:319px;top:760px;width:15px;height:17px;border:1px solid #9a9a9a;border-radius:2px;background:linear-gradient(#f2f2f2 0,#e8e8e8 50%,#d8d8d8 51%,#d0d0d0 100%)"></div>
<svg class="a" style="left:872px;top:764px;opacity:1" width="5" height="8" viewBox="0 0 5 8"><defs><linearGradient id="ag4" x1="0" y1="0" x2="1" y2="1"><stop offset="0" stop-color="#111"/><stop offset="1" stop-color="#7a7a7a"/></linearGradient></defs><path d="M0.5 0.5 L4.2 3.8 L0.5 7.1 Z" fill="url(#ag4)"/></svg>
<div class="a" style="left:8px;top:777px;width:893px;height:1px;background:#5b6470"></div>
<div class="a" style="left:8px;top:778px;width:893px;height:20px;background:#f0f0f0"></div>
<div class="a" style="left:611px;top:165px;width:267px;height:520px;border-radius:7px 7px 7px 7px;box-shadow:0 2px 11px 1px rgba(0,0,0,0.30)"></div>
<div class="a" style="left:611px;top:165px;width:267px;height:520px;border:1px solid #6b6b6b;border-radius:7px 7px 7px 7px;background:linear-gradient(90deg,#f8f8f8,#fcfcfc 40%,#fafafa)"></div>
<div class="a fw" style="left:641px;top:174px;font-size:11.5px">Fields</div>
<div class="a" style="left:768px;top:165px;width:104px;height:20px;border:1px solid #a3a3a3;border-top:none;border-radius:0 0 5px 5px;background:linear-gradient(#fdfdfd,#f3f3f3)"></div>
<div class="a" style="left:796px;top:166px;width:1px;height:18px;background:#c3c3c3"></div>
<div class="a" style="left:823px;top:166px;width:1px;height:18px;background:#c3c3c3"></div>
<div class="a" style="left:777px;top:175px;width:12px;height:5px;border:1px solid #4a5568;border-radius:1px;background:#fff"></div>
<div class="a" style="left:804px;top:170px;width:12px;height:10px;border:1px solid #c0c0c0;border-radius:1px"><div class="a" style="left:2px;top:2px;width:6px;height:4px;border:1px solid #c6c6c6"></div></div>
<svg class="a" style="left:841px;top:169px" width="14" height="12" viewBox="0 0 14 12"><path d="M1.5 0.5 L5.5 0.5 L7 2.7 L8.5 0.5 L12.5 0.5 L9.2 5.7 L12.5 10.8 L8.5 10.8 L7 8.6 L5.5 10.8 L1.5 10.8 L4.8 5.7 Z" fill="#f0f0f0" stroke="#3a4558" stroke-width="1.3"/></svg>
<div class="a" style="left:618px;top:194px;width:253px;height:484px;border:1px solid #8a8a8a;background:#f0f0f0"></div>
<div class="a fi" style="left:631px;top:207px">Name:</div>
<div class="a" style="left:630px;top:221px;width:230px;height:332px;background:#fff;border-top:2px solid #696969;border-left:2px solid #696969;border-right:1px solid #f8f8f8;border-bottom:1px solid #f8f8f8"></div>
<div class="a" style="left:632px;top:223px;width:210px;height:312px;overflow:hidden">
<div class="a fi" style="left:12px;top:1px;color:#000">Summation Options</div>
<svg class="a" style="left:0px;top:20px" width="9" height="5" viewBox="0 0 9 5"><path d="M0 0 H8.5 L4.25 4.5 Z" fill="#000"/></svg>
<div class="a fi" style="left:12px;top:15px;color:#000">Customers</div>
<div class="a fi" style="left:24px;top:29px;color:#000">Age</div>
<div class="a fi" style="left:24px;top:43px;color:#000">Age Groups</div>
<div class="a" style="left:12px;top:56px;width:197px;height:14px;background:#3399ff;outline:1px dotted #000;outline-offset:-1px"></div>
<div class="a fi" style="left:24px;top:57px;font-weight:bold;letter-spacing:0.4px;color:#fff">Gender</div>
<div class="a fi" style="left:24px;top:71px;font-weight:bold;letter-spacing:0.4px;color:#000">Marital Status</div>
<div class="a fi" style="left:24px;top:85px;font-weight:bold;letter-spacing:0.4px;color:#000">Occupation</div>
<div class="a fi" style="left:24px;top:99px;color:#000">Area</div>
<div class="a fi" style="left:24px;top:113px;color:#000">Customer Type</div>
<div class="a fi" style="left:24px;top:127px;color:#000">Individual Type</div>
<div class="a fi" style="left:24px;top:141px;color:#000">Customer Open Calendar Date</div>
<div class="a fi" style="left:24px;top:155px;color:#000">Customer Open Financial Date</div>
<div class="a fi" style="left:24px;top:169px;color:#000">Customer Open Quarter</div>
<div class="a fi" style="left:24px;top:183px;color:#000">Customer Open Month</div>
<div class="a fi" style="left:24px;top:197px;color:#000">Customer Open Week</div>
<div class="a fi" style="left:24px;top:211px;color:#000">Customer Open Day of Month</div>
<div class="a fi" style="left:24px;top:225px;color:#000">Customer Open Day of Week</div>
<svg class="a" style="left:0px;top:244px" width="9" height="5" viewBox="0 0 9 5"><path d="M0 0 H8.5 L4.25 4.5 Z" fill="#000"/></svg>
<div class="a fi" style="left:12px;top:239px;color:#000">Accounts</div>
<div class="a fi" style="left:24px;top:253px;font-weight:bold;letter-spacing:0.4px;color:#000">Product Type</div>
<div class="a fi" style="left:24px;top:267px;color:#000">Account Open Calendar Date</div>
<div class="a fi" style="left:24px;top:281px;color:#000">Account Open Financial Date</div>
<div class="a fi" style="left:24px;top:295px;color:#000">Account Open Quarter</div>
<div class="a fi" style="left:24px;top:309px;color:#000">Account Open Month</div>
</div>
<div class="a" style="left:842px;top:223px;width:17px;height:312px;background:#efefef;border-left:1px solid #f4f4f4"></div>
<svg class="a" style="left:847px;top:230px" width="8" height="5" viewBox="0 0 8 5"><defs><linearGradient id="ag5" x1="0" y1="0" x2="1" y2="1"><stop offset="0" stop-color="#111"/><stop offset="1" stop-color="#7a7a7a"/></linearGradient></defs><path d="M0.5 4.5 L3.8 0.8 L7.1 4.5 Z" fill="url(#ag5)"/></svg>
<div class="a" style="left:843px;top:241px;width:15px;height:15px;border:1px solid #9a9a9a;border-radius:2px;background:linear-gradient(90deg,#f2f2f2 0,#e8e8e8 50%,#d8d8d8 51%,#d0d0d0 100%)"></div>
<svg class="a" style="left:847px;top:524px" width="8" height="5" viewBox="0 0 8 5"><defs><linearGradient id="ag6" x1="0" y1="0" x2="1" y2="1"><stop offset="0" stop-color="#111"/><stop offset="1" stop-color="#7a7a7a"/></linearGradient></defs><path d="M0.5 0.5 L3.8 4.2 L7.1 0.5 Z" fill="url(#ag6)"/></svg>
<div class="a" style="left:632px;top:535px;width:210px;height:17px;background:#eaeaea"></div>
<div class="a" style="left:842px;top:535px;width:17px;height:17px;background:#f0f0f0"></div>
<svg class="a" style="left:638px;top:540px;opacity:0.45" width="5" height="8" viewBox="0 0 5 8"><defs><linearGradient id="ag7" x1="0" y1="0" x2="1" y2="1"><stop offset="0" stop-color="#111"/><stop offset="1" stop-color="#7a7a7a"/></linearGradient></defs><path d="M4.5 0.5 L0.8 3.8 L4.5 7.1 Z" fill="url(#ag7)"/></svg>
<svg class="a" style="left:830px;top:540px;opacity:0.45" width="5" height="8" viewBox="0 0 5 8"><defs><linearGradient id="ag8" x1="0" y1="0" x2="1" y2="1"><stop offset="0" stop-color="#111"/><stop offset="1" stop-color="#7a7a7a"/></linearGradient></defs><path d="M0.5 0.5 L4.2 3.8 L0.5 7.1 Z" fill="url(#ag8)"/></svg>
<div class="a" style="left:630px;top:558px;width:13px;height:13px;border:1px solid #8e8f8f;background:linear-gradient(135deg,#dcdcdc,#fefefe)"><div class="a" style="left:1px;top:1px;width:9px;height:9px;border:1px solid #c5c5c5;background:linear-gradient(135deg,#d8d8d8,#f6f6f6)"></div></div>
<div class="a fi" style="left:646px;top:559px;font-size:10.8px">Add Total With Default Recodes</div>
<div class="a" style="left:631px;top:579px;width:98px;height:21px;border:1px solid #707070;border-radius:3px;background:linear-gradient(#f2f2f2 0,#ebebeb 50%,#dddddd 51%,#cfcfcf 100%);box-shadow:inset 0 0 0 1px rgba(255,255,255,0.7)"></div>
<div class="a fb" style="left:631px;top:584px;width:98px;text-align:center">Recode</div>
<div class="a" style="left:761px;top:579px;width:98px;height:21px;border:1px solid #707070;border-radius:3px;background:linear-gradient(#f2f2f2 0,#ebebeb 50%,#dddddd 51%,#cfcfcf 100%);box-shadow:inset 0 0 0 1px rgba(255,255,255,0.7)"></div>
<div class="a fb" style="left:761px;top:584px;width:98px;text-align:center">Delete</div>
<div class="a" style="left:631px;top:612px;width:98px;height:21px;border:1px solid #707070;border-radius:3px;background:linear-gradient(#f2f2f2 0,#ebebeb 50%,#dddddd 51%,#cfcfcf 100%);box-shadow:inset 0 0 0 1px rgba(255,255,255,0.7)"></div>
<div class="a fb" style="left:631px;top:617px;width:98px;text-align:center">Add</div>
<div class="a" style="left:761px;top:612px;width:98px;height:21px;border:1px solid #707070;border-radius:3px;background:linear-gradient(#f2f2f2 0,#ebebeb 50%,#dddddd 51%,#cfcfcf 100%);box-shadow:inset 0 0 0 1px rgba(255,255,255,0.7)"></div>
<div class="a fb" style="left:761px;top:617px;width:98px;text-align:center">Remove</div>
<div class="a" style="left:631px;top:644px;width:98px;height:21px;border:1px solid #707070;border-radius:3px;background:linear-gradient(#f2f2f2 0,#ebebeb 50%,#dddddd 51%,#cfcfcf 100%);box-shadow:inset 0 0 0 1px rgba(255,255,255,0.7)"></div>
<div class="a fb" style="left:631px;top:649px;width:98px;text-align:center">Load</div>
<div class="a" style="left:761px;top:644px;width:98px;height:21px;border:1px solid #707070;border-radius:3px;background:linear-gradient(#f2f2f2 0,#ebebeb 50%,#dddddd 51%,#cfcfcf 100%);box-shadow:inset 0 0 0 1px rgba(255,255,255,0.7)"></div>
<div class="a fb" style="left:761px;top:649px;width:98px;text-align:center">Save</div>

<div class="lbl" style="left:453px;top:3px;width:126px;height:28px;line-height:24px">Title Bar</div>
<div class="lbl" style="left:315px;top:26px;width:126px;height:28px;line-height:24px">Menu Bar</div>
<div class="lbl" style="left:149px;top:50px;width:126px;height:28px;line-height:24px">Toolbar</div>
<div class="lbl" style="left:450px;top:110px;width:140px;height:32px;line-height:28px">Table Header</div>
<div class="lbl" style="left:489px;top:157px;width:153px;height:33px;line-height:29px">Spanner Label</div>
<div class="lbl" style="left:85px;top:168px;width:126px;height:28px;line-height:24px">Wafer Axis</div>
<div class="lbl" style="left:316px;top:191px;width:126px;height:28px;line-height:24px">Column Axis</div>
<div class="lbl" style="left:140px;top:282px;width:126px;height:28px;line-height:24px">Row Axis</div>
<div class="lbl" style="left:672px;top:335px;width:147px;height:36px;line-height:32px">Fields Window</div>
<div class="lbl" style="left:421px;top:446px;width:126px;height:28px;line-height:24px">Table Data</div>
<div class="lbl" style="left:143px;top:708px;width:126px;height:28px;line-height:24px">Table Footer</div>
<div class="lbl" style="left:142px;top:774px;width:126px;height:28px;line-height:24px">Status Bar</div>
</body></html>
